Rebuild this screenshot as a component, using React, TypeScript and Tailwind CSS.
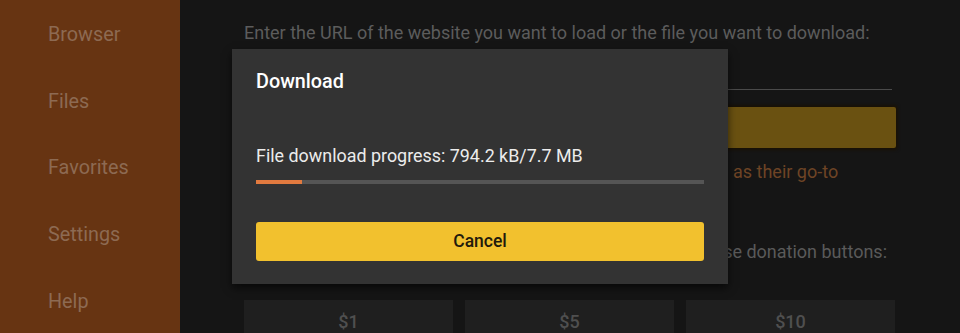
const menu = ["Browser", "Files", "Favorites", "Settings", "Help"];
const donations = ["$1", "$5", "$10"];

export default function App() {
  const progress = (794.2 / 7700) * 100;

  return (
    <div className="relative flex h-[333px] w-[960px] overflow-hidden bg-[#151515] font-['Roboto',sans-serif]">
      {/* Sidebar */}
      <div className="flex w-[180px] shrink-0 flex-col bg-[#673412] pl-[48px] pt-[22px]">
        {menu.map((m) => (
          <div key={m} className="h-[66.7px] shrink-0 text-[19.8px] leading-[26px] text-[#8d6a52]">
            {m}
          </div>
        ))}
      </div>

      {/* Main content (dimmed behind dialog) */}
      <div className="flex-1 pl-[64px] pr-[64px] pt-[20px]">
        <p className="text-[18px] leading-[26px] text-[#5c5c5c]">
          Enter the URL of the website you want to load or the file you want to download:
        </p>
        <div className="mt-[43px] h-px w-[648px] bg-[#4a4a4a]" />
        <div className="mt-[17px] h-[41px] w-[652px] rounded-[2px] bg-[#6a5111] shadow-[0_0_3px_2px_#1a1206]" />
        <p className="mt-[11px] pl-[489px] text-[18px] leading-[26px] text-[#6e4425]">as their go-to</p>
        <p className="mt-[54px] pr-[9px] text-right text-[18px] leading-[26px] text-[#5a5a5a]">se donation buttons:</p>
        <div className="mt-[35px] flex gap-[12px]">
          {donations.map((d) => (
            <div key={d} className="flex h-[50px] w-[209px] shrink-0 justify-center bg-[#1f1f1f] pt-[8px] text-[18px] font-medium text-[#4f4f4f]">
              {d}
            </div>
          ))}
        </div>
      </div>

      {/* Download dialog */}
      <div className="absolute left-[232px] top-[49px] flex h-[235px] w-[496px] flex-col bg-[#333333] px-[24px] shadow-[0_4px_8px_rgba(0,0,0,0.6)]">
        <h2 className="mt-[20px] text-[19.8px] font-medium leading-[26px] text-white">Download</h2>
        <p className="mt-[49px] text-[17.9px] leading-[24px] text-[#ececec]">
          File download progress: 794.2 kB/7.7 MB
        </p>
        <div className="mt-[12px] h-[4px] w-full bg-[#555555]">
          <div className="h-full bg-[#e27a3f]" style={{ width: `${progress}%` }} />
        </div>
        <button className="mt-[38px] h-[39px] w-full rounded-[3px] bg-[#f2c12e] text-[17.5px] font-medium text-[#221a0c]">
          Cancel
        </button>
      </div>
    </div>
  );
}
